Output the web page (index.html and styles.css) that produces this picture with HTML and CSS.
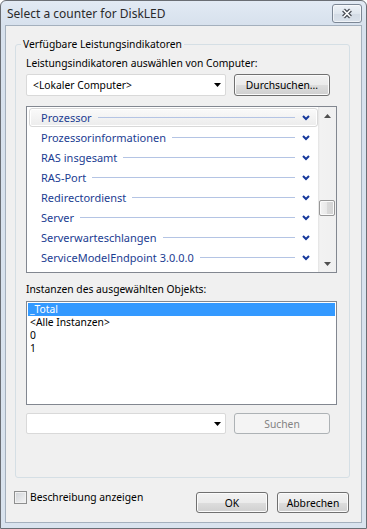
FILE: index.html
```html
<!DOCTYPE html>
<html lang="de">
<head>
    <meta charset="UTF-8">
    <title>Select a counter for DiskLED</title>
    <link rel="stylesheet" href="styles.css">
</head>
<body>
    <div class="window">
        <div class="titlebar">
            <span class="title">Select a counter for DiskLED</span>
            <div class="close">
                <svg width="14" height="11" viewBox="0 0 14 11">
                    <path d="M3.5 2 L10.5 9 M10.5 2 L3.5 9" stroke="#4a4f57" stroke-width="4" fill="none"/>
                    <path d="M3.5 2 L10.5 9 M10.5 2 L3.5 9" stroke="#ffffff" stroke-width="1.6" fill="none"/>
                </svg>
            </div>
        </div>

        <div class="client">
            <fieldset class="group">
                <legend>Verfügbare Leistungsindikatoren</legend>
                <div class="label">Leistungsindikatoren auswählen von Computer:</div>
                <div class="row">
                    <div class="combo">
                        <span>&lt;Lokaler Computer&gt;</span>
                        <svg class="drop" width="7" height="4" viewBox="0 0 7 4"><polygon points="0,0 7,0 3.5,4" fill="#000"/></svg>
                    </div>
                    <div class="btn">Durchsuchen...</div>
                </div>

                <div class="counters">
                    <ul class="counter-list">
                        <li class="hot"><span>Prozessor</span><i class="rule"></i><svg class="chev" width="8" height="6" viewBox="0 0 8 6"><polyline points="1,1 4,4 7,1" /></svg></li>
                        <li><span>Prozessorinformationen</span><i class="rule"></i><svg class="chev" width="8" height="6" viewBox="0 0 8 6"><polyline points="1,1 4,4 7,1" /></svg></li>
                        <li><span>RAS insgesamt</span><i class="rule"></i><svg class="chev" width="8" height="6" viewBox="0 0 8 6"><polyline points="1,1 4,4 7,1" /></svg></li>
                        <li><span>RAS-Port</span><i class="rule"></i><svg class="chev" width="8" height="6" viewBox="0 0 8 6"><polyline points="1,1 4,4 7,1" /></svg></li>
                        <li><span>Redirectordienst</span><i class="rule"></i><svg class="chev" width="8" height="6" viewBox="0 0 8 6"><polyline points="1,1 4,4 7,1" /></svg></li>
                        <li><span>Server</span><i class="rule"></i><svg class="chev" width="8" height="6" viewBox="0 0 8 6"><polyline points="1,1 4,4 7,1" /></svg></li>
                        <li><span>Serverwarteschlangen</span><i class="rule"></i><svg class="chev" width="8" height="6" viewBox="0 0 8 6"><polyline points="1,1 4,4 7,1" /></svg></li>
                        <li><span>ServiceModelEndpoint 3.0.0.0</span><i class="rule"></i><svg class="chev" width="8" height="6" viewBox="0 0 8 6"><polyline points="1,1 4,4 7,1" /></svg></li>
                    </ul>
                    <div class="vscroll">
                        <div class="arrow"><svg width="7" height="4" viewBox="0 0 7 4"><polygon points="0,4 7,4 3.5,0" fill="#505050"/></svg></div>
                        <div class="track"><div class="thumb"></div></div>
                        <div class="arrow"><svg width="7" height="4" viewBox="0 0 7 4"><polygon points="0,0 7,0 3.5,4" fill="#505050"/></svg></div>
                    </div>
                </div>

                <div class="label label-gap">Instanzen des ausgewählten Objekts:</div>
                <ul class="instances">
                    <li class="selected">_Total</li>
                    <li>&lt;Alle Instanzen&gt;</li>
                    <li>0</li>
                    <li>1</li>
                </ul>

                <div class="row row-search">
                    <div class="combo">
                        <span></span>
                        <svg class="drop" width="7" height="4" viewBox="0 0 7 4"><polygon points="0,0 7,0 3.5,4" fill="#000"/></svg>
                    </div>
                    <div class="btn disabled">Suchen</div>
                </div>
            </fieldset>

            <div class="footer">
                <label class="check"><span class="box"></span>Beschreibung anzeigen</label>
                <div class="btn wide">OK</div>
                <div class="btn wide">Abbrechen</div>
            </div>
        </div>
    </div>
</body>
</html>
```

FILE: styles.css
```css
body {
    margin: 0;
    font-family: "Noto Sans", "Open Sans", sans-serif;
    font-size: 10.3px;
    color: #000;
}

.window {
    width: 367px;
    height: 529px;
    box-sizing: border-box;
    border: 1px solid #6a6e74;
    border-radius: 6px 6px 0 0;
    background: linear-gradient(#e2eaf4, #d7e1ed 24px, #d9e3ee);
    display: flex;
    flex-direction: column;
}

.titlebar {
    height: 24px;
    display: flex;
    align-items: center;
    padding: 0 4px 0 6px;
}

.title {
    font-size: 12px;
    color: #2a2a2a;
}

.close {
    margin-left: auto;
    width: 30px;
    height: 19px;
    box-sizing: border-box;
    border: 1px solid #7c8795;
    border-radius: 3px;
    background: linear-gradient(#eef2f7, #dfe6ee 50%, #d3dbe5 51%, #dae2eb);
    box-shadow: inset 0 0 0 1px rgba(255, 255, 255, 0.6);
    display: flex;
    align-items: center;
    justify-content: center;
}

.client {
    flex: 1;
    margin: 0 4px 5px 4px;
    border: 1px solid #a4b0bd;
    background: #f0f0f0;
    display: flex;
    flex-direction: column;
}

/* group box */
.group {
    margin: 10px 11px 0 9px;
    padding: 0 12px 43px 10px;
    border: 1px solid #d5dfe5;
    border-radius: 3px;
    min-width: 0;
}

.group legend {
    margin-left: -5px;
    padding: 0 2px;
    line-height: 16px;
}

.label {
    margin-top: 3px;
    line-height: 16px;
}

.label-gap {
    margin-top: 8px;
}

.row {
    display: flex;
    margin-top: 3px;
    height: 22px;
}

.row-search {
    margin-top: 8px;
    height: 21px;
}

.combo {
    width: 200px;
    box-sizing: border-box;
    border: 1px solid #d9d9d9;
    border-radius: 2px;
    background: #fff;
    display: flex;
    align-items: center;
    padding: 0 4px 0 6px;
}

.combo .drop {
    margin-left: auto;
}

.btn {
    box-sizing: border-box;
    width: 96px;
    margin-left: 8px;
    border: 1px solid #707070;
    border-radius: 3px;
    background: linear-gradient(#f2f2f2, #ebebeb 50%, #dddddd 51%, #cfcfcf);
    box-shadow: inset 0 0 0 1px #fbfbfb;
    display: flex;
    align-items: center;
    justify-content: center;
}

.btn.disabled {
    border-color: #adb2b5;
    background: #f4f4f4;
    box-shadow: none;
    color: #838383;
}

/* counter list */
.counters {
    margin-top: 10px;
    height: 167px;
    box-sizing: border-box;
    border: 1px solid #828790;
    background: #fff;
    display: flex;
}

.counter-list {
    flex: 1;
    margin: 0;
    padding: 0;
    list-style: none;
    overflow: hidden;
}

.counter-list li {
    height: 19px;
    box-sizing: border-box;
    margin: 1px 0 1px 2px;
    padding: 0 6px 0 11px;
    border: 1px solid transparent;
    border-radius: 3px;
    display: flex;
    align-items: center;
    font-size: 11px;
    color: #1b3d92;
    white-space: nowrap;
}

.counter-list li.hot {
    border-color: #d9d9d9;
    background: linear-gradient(#fafafa, #ececec);
    box-shadow: inset 0 0 0 1px #ffffff;
}

.rule {
    flex: 1;
    height: 1px;
    margin: 0 7px 0 6px;
    background: #b4c4e4;
}

.chev {
    flex: none;
    margin-right: 1px;
}

.chev polyline {
    fill: none;
    stroke: #17399c;
    stroke-width: 2;
}

.vscroll {
    width: 18px;
    display: flex;
    flex-direction: column;
    background: linear-gradient(90deg, #e3e3e3, #f2f2f2 2px, #f0f0f0);
}

.vscroll .arrow {
    height: 17px;
    display: flex;
    align-items: center;
    justify-content: center;
}

.track {
    flex: 1;
}

.thumb {
    margin: 76px 1px 0 1px;
    height: 16px;
    box-sizing: border-box;
    border: 1px solid #979797;
    border-radius: 2px;
    background: linear-gradient(90deg, #f3f3f3, #e8e8e8 50%, #d9d9d9 51%, #d4d4d4);
    box-shadow: inset 0 0 0 1px #fafafa;
}

/* instances */
.instances {
    margin: 4px 0 0 0;
    padding: 1px;
    height: 104px;
    box-sizing: border-box;
    border: 1px solid #828790;
    background: #fff;
    list-style: none;
}

.instances li {
    line-height: 13px;
    padding-left: 2px;
    white-space: nowrap;
}

.instances li.selected {
    background: #3399ff;
    color: #fff;
}

/* footer */
.footer {
    display: flex;
    align-items: flex-start;
    margin-top: 14px;
    padding: 0 12px 0 8px;
}

.check {
    display: flex;
    align-items: center;
    margin-top: -1px;
    line-height: 13px;
    margin-right: auto;
}

.check .box {
    width: 13px;
    height: 13px;
    box-sizing: border-box;
    margin-right: 3px;
    border: 1px solid #8e8f8f;
    background: linear-gradient(135deg, #d0d3d8, #f4f4f4);
    box-shadow: inset 0 0 0 1px #f1f1f1;
}

.btn.wide {
    width: 72px;
    height: 21px;
    margin-left: 9px;
}
```
